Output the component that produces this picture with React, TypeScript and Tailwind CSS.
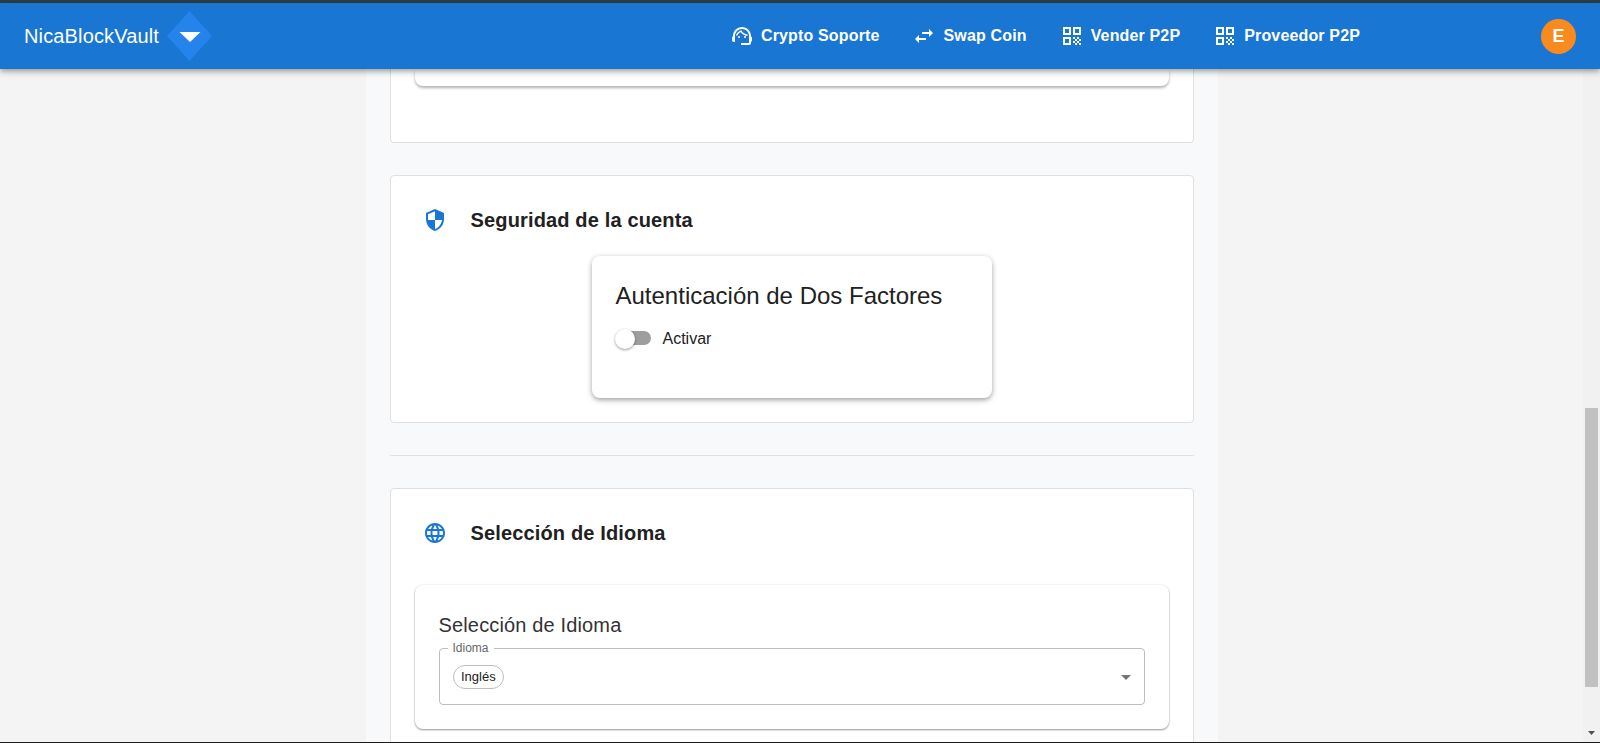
const SHIELD = "M12 1L3 5v6c0 5.55 3.84 10.74 9 12 5.16-1.26 9-6.45 9-12V5l-9-4zm0 10.99h7c-.53 4.12-3.28 7.79-7 8.94V12H5V6.3l7-3.11v8.8z";
const GLOBE = "M11.99 2C6.47 2 2 6.48 2 12s4.47 10 9.99 10C17.52 22 22 17.52 22 12S17.52 2 11.99 2zm6.93 6h-2.95c-.32-1.25-.78-2.45-1.38-3.56 1.84.63 3.37 1.91 4.33 3.56zM12 4.04c.83 1.2 1.48 2.53 1.91 3.96h-3.82c.43-1.43 1.08-2.76 1.91-3.96zM4.26 14C4.1 13.36 4 12.69 4 12s.1-1.36.26-2h3.38c-.08.66-.14 1.32-.14 2 0 .68.06 1.34.14 2H4.26zm.82 2h2.95c.32 1.25.78 2.45 1.38 3.56-1.84-.63-3.37-1.9-4.33-3.56zm2.95-8H5.08c.96-1.66 2.49-2.93 4.33-3.56C8.81 5.55 8.35 6.75 8.03 8zM12 19.96c-.83-1.2-1.48-2.53-1.91-3.96h3.82c-.43 1.43-1.08 2.76-1.91 3.96zM14.34 14H9.66c-.09-.66-.16-1.32-.16-2 0-.68.07-1.35.16-2h4.68c.09.65.16 1.32.16 2 0 .68-.07 1.34-.16 2zm.25 5.56c.6-1.11 1.06-2.31 1.38-3.56h2.95c-.96 1.65-2.49 2.93-4.33 3.56zM16.36 14c.08-.66.14-1.32.14-2 0-.68-.06-1.34-.14-2h3.38c.16.64.26 1.31.26 2s-.1 1.36-.26 2h-3.38z";
const SWAP = "M6.99 11L3 15l3.99 4v-3H14v-2H6.99v-3zM21 9l-3.99-4v3H10v2h7.01v3L21 9z";
const QR = "M3 11h8V3H3v8zm2-6h4v4H5V5zM3 21h8v-8H3v8zm2-6h4v4H5v-4zM13 3v8h8V3h-8zm6 6h-4V5h4v4zM13 13h2v2h-2zM15 15h2v2h-2zM13 17h2v2h-2zM15 19h2v2h-2zM17 17h2v2h-2zM17 13h2v2h-2zM19 15h2v2h-2zM19 19h2v2h-2z";
const HEADSET = "M21 12.22C21 6.73 16.74 3 12 3c-4.69 0-9 3.65-9 9.28-.6.34-1 .98-1 1.72v2c0 1.1.9 2 2 2h1v-6.1c0-3.87 3.13-7 7-7s7 3.13 7 7V19h-8v2h8c1.1 0 2-.9 2-2v-1.22c.59-.31 1-.92 1-1.62v-2.3c0-.7-.41-1.31-1-1.64z";

function Icon({ d, className }: { d: string; className: string }) {
  return (
    <svg viewBox="0 0 24 24" className={className} fill="currentColor">
      <path d={d} />
    </svg>
  );
}

function SupportIcon() {
  return (
    <svg viewBox="0 0 24 24" className="h-6 w-6 text-white" fill="currentColor">
      <path d={HEADSET} />
      <circle cx="9" cy="13" r="1" />
      <circle cx="15" cy="13" r="1" />
      <path d="M6.5 11.6C7.6 9 9.6 7.6 11 7.2c1 1.8 3.4 3.7 6.5 4" fill="none" stroke="currentColor" strokeWidth="1.4" />
    </svg>
  );
}

function NavItem({ icon, label, className }: { icon: React.ReactNode; label: string; className: string }) {
  return (
    <div className={`flex items-center ${className}`}>
      {icon}
      <span className="-mt-px text-[16px] font-bold leading-none tracking-[0.15px] text-white">{label}</span>
    </div>
  );
}

export default function App() {
  return (
    <div className="relative flex h-[743px] w-full flex-col overflow-hidden bg-[#f4f4f4] font-['Liberation_Sans',Arial,sans-serif] text-[#212121]">
      <div className="h-[3px] shrink-0 bg-[#2c3e46]" />
      <header className="relative z-10 flex h-[66px] shrink-0 items-center bg-[#1976d2] pl-6 pr-6 shadow-[0_2px_4px_-1px_rgba(0,0,0,0.2),0_4px_5px_0_rgba(0,0,0,0.14),0_1px_10px_0_rgba(0,0,0,0.12)]">
        <span className="text-[20px] leading-none tracking-[0.14px] text-white">NicaBlockVault</span>
        <svg viewBox="0 0 45 50" className="ml-2 h-[50px] w-[45px]">
          <path d="M22.5 0L45 25 22.5 50 0 25z" fill="#2583ec" />
          <path d="M12.5 21h21L23 31z" fill="#fff" />
        </svg>
        <div className="ml-auto flex items-center">
          <NavItem className="mr-8 gap-[7px]" icon={<SupportIcon />} label="Crypto Soporte" />
          <NavItem className="mr-[33px] gap-2" icon={<Icon d={SWAP} className="h-6 w-6 text-white" />} label="Swap Coin" />
          <NavItem className="mr-[33px] gap-[7px]" icon={<Icon d={QR} className="h-6 w-6 text-white" />} label="Vender P2P" />
          <NavItem className="mr-[181px] gap-[7px]" icon={<Icon d={QR} className="h-6 w-6 text-white" />} label="Proveedor P2P" />
          <div className="flex h-[35px] w-[35px] items-center justify-center rounded-full bg-[#f98a1d] text-[18px] font-bold text-white">E</div>
        </div>
      </header>

      <div className="flex min-h-0 flex-1">
        <main className="min-w-0 flex-1 overflow-hidden">
          <div className="mx-auto h-full w-[852px] bg-[#f8f9fb] px-6">
            <section className="mb-8 h-[74px] rounded-b border-x border-b border-[#e0e0e0] bg-white px-6">
              <div className="h-[17px] rounded-b-lg bg-white shadow-[0_2px_3px_rgba(0,0,0,0.3)]" />
            </section>

            <section className="h-[248px] rounded border border-[#e0e0e0] bg-white pt-[23px]">
              <div className="flex h-[42px] items-center pl-8">
                <Icon d={SHIELD} className="h-6 w-6 text-[#1976d2]" />
                <h2 className="ml-6 text-[20px] font-bold tracking-[0.15px]">Seguridad de la cuenta</h2>
              </div>
              <div className="mx-auto mt-[15px] h-[142px] w-[400px] rounded-lg bg-white px-6 pt-[25px] shadow-[0_2px_5px_-1px_rgba(0,0,0,0.3),0_3px_7px_0_rgba(0,0,0,0.12),0_0_6px_0_rgba(0,0,0,0.08)]">
                <h3 className="text-[24px] leading-[30px]">Autenticación de Dos Factores</h3>
                <div className="mt-[18px] flex items-center">
                  <div className="relative -ml-0.5 h-5 w-[37px]">
                    <div className="absolute left-2 top-[2px] h-[14px] w-[29px] rounded-full bg-[#9e9e9e]" />
                    <div className="absolute left-px top-0 h-5 w-5 rounded-full bg-white shadow-[0_1px_3px_rgba(0,0,0,0.4)]" />
                  </div>
                  <span className="ml-3 text-[16px] leading-5">Activar</span>
                </div>
              </div>
            </section>

            <hr className="my-8 border-[#e0e0e0]" />

            <section className="h-[300px] rounded border border-[#e0e0e0] bg-white pt-[23px]">
              <div className="flex h-[42px] items-center pl-8">
                <Icon d={GLOBE} className="h-6 w-6 text-[#1976d2]" />
                <h2 className="ml-6 text-[20px] font-bold tracking-[0.15px]">Selección de Idioma</h2>
              </div>
              <div className="ml-6 mr-6 mt-[31px] h-[144px] rounded-lg bg-white px-6 pt-7 shadow-[0_1px_2px_rgba(0,0,0,0.4),0_0_3px_rgba(0,0,0,0.07)]">
                <h3 className="text-[20px] leading-6 tracking-[0.15px] text-[#333]">Selección de Idioma</h3>
                <div className="relative mt-[11px] flex h-[57px] items-center rounded border border-[#bdbdbd] pl-[13px]">
                  <span className="absolute -top-[7px] left-2 bg-white px-[5px] text-[12px] leading-[13px] text-[#666]">Idioma</span>
                  <span className="flex h-6 items-center rounded-full border border-[#bdbdbd] px-[7.5px] text-[13px]">Inglés</span>
                  <svg viewBox="0 0 24 24" className="absolute right-1.5 top-4 h-6 w-6 text-[#757575]" fill="currentColor">
                    <path d="M7 10l5 5 5-5z" />
                  </svg>
                </div>
              </div>
            </section>
          </div>
        </main>
        <aside className="flex w-[17px] shrink-0 flex-col bg-[#f1f1f1] px-0.5">
          <div className="mt-[339px] h-[279px] w-[13px] bg-[#c1c1c1]" />
          <svg viewBox="0 0 7 4" className="mx-auto mb-[7px] mt-auto h-1 w-[7px] text-[#505050]" fill="currentColor">
            <path d="M0 0h7L3.5 4z" />
          </svg>
        </aside>
      </div>
      <div className="h-px shrink-0 bg-[#1a1a1a]" />
    </div>
  );
}
